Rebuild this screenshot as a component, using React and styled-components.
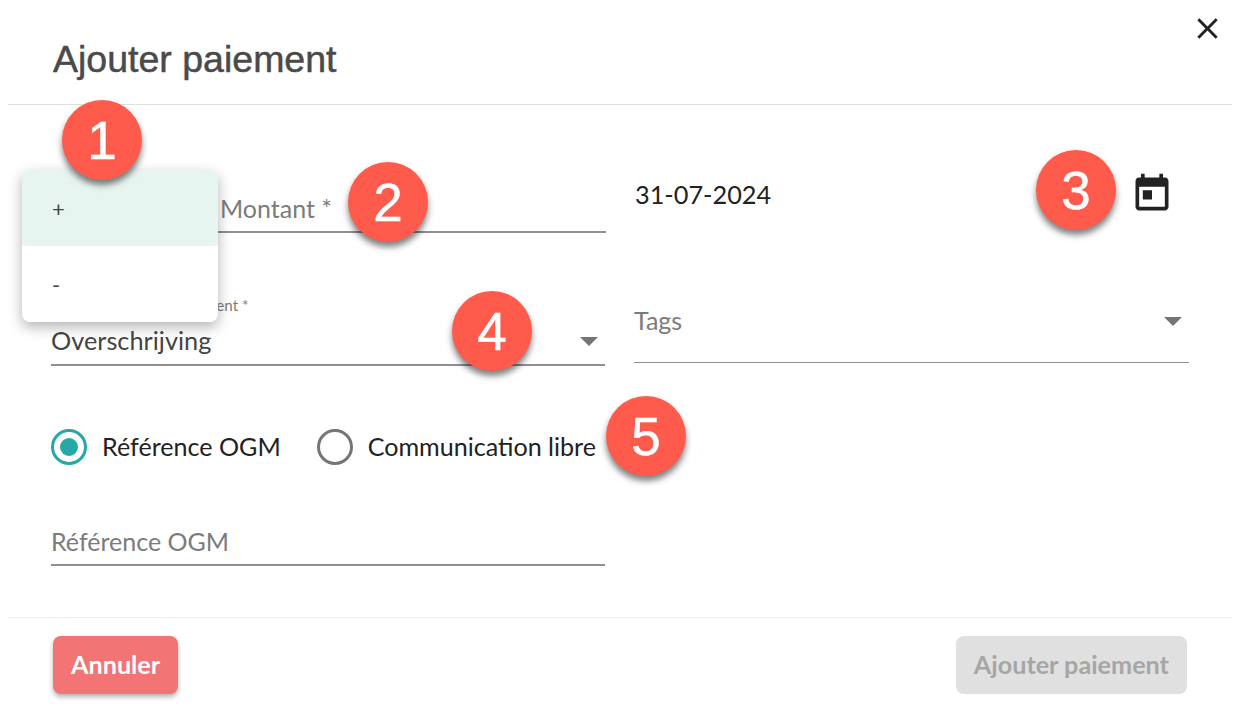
import styled, { createGlobalStyle } from "styled-components";

const GlobalStyle = createGlobalStyle`
  body {
    margin: 0;
    background: #fff;
    font-family: "Lato", "Liberation Sans", sans-serif;
  }
`;

const Dialog = styled.div`
  position: relative;
  width: 1246px;
  height: 724px;
  overflow: hidden;
  background: #fff;
`;

const Header = styled.div`
  height: 105px;
  margin: 0 14px 0 8px;
  padding: 0 0 0 45px;
  box-sizing: border-box;
  border-bottom: 1px solid #e0e0e0;
  display: flex;
  justify-content: space-between;
  align-items: flex-start;
`;

const Title = styled.h1`
  margin: 38px 0 0;
  font-family: "Liberation Sans", Arial, sans-serif;
  font-size: 37.5px;
  line-height: 42px;
  font-weight: 400;
  color: #4a4a4a;
  -webkit-text-stroke: 0.5px #4a4a4a;
`;

const CloseIcon = styled.svg`
  width: 35px;
  height: 35px;
  margin: 11px 7px 0 0;
  fill: #222;
`;

const Body = styled.div`
  height: 512px;
  box-sizing: border-box;
  padding: 78px 0 0 51px;
  display: flex;
  flex-direction: column;
`;

const Row = styled.div`
  display: grid;
  grid-template-columns: 555px 555px;
  column-gap: 28px;
  align-items: end;
  margin-bottom: ${(props) => props.$bottom || 0}px;
`;

const Field = styled.div`
  position: relative;
  height: 50px;
  box-sizing: border-box;
  display: flex;
  align-items: center;
  justify-content: space-between;
  padding-top: 2px;
  border-bottom: 2px solid #8f8f8f;
  font-size: 25px;
  color: #444;
`;

const TagsField = styled(Field)`
  height: 64px;
  margin-bottom: 3px;
  padding: 0 0 18px;
  border-bottom: 1px solid #8f8f8f;
`;

const DateField = styled.div`
  align-self: start;
  height: 22px;
  display: flex;
  align-items: center;
  justify-content: space-between;
  padding-left: 1px;
  font-size: 25.3px;
  color: #222;
`;

const Placeholder = styled.span`
  color: #7b7b7b;
  padding-left: ${(props) => props.$indent || 0}px;
`;

const TagsPlaceholder = styled(Placeholder)`
  margin-bottom: 4px;
`;

const SelectValue = styled.span`
  font-size: 25.3px;
  margin-bottom: 2px;
`;

const SmallLabel = styled.label`
  position: absolute;
  left: 0;
  top: -20px;
  font-size: 15.2px;
  line-height: 18px;
  color: #7b7b7b;
`;

const Arrow = styled.span`
  width: 0;
  height: 0;
  margin-right: 7px;
  border-left: 9px solid transparent;
  border-right: 9px solid transparent;
  border-top: 9px solid #757575;
`;

const CalendarIcon = styled.svg`
  width: 44px;
  height: 44px;
  flex-shrink: 0;
  margin-right: 15px;
  fill: #222;
`;

const RadioRow = styled.div`
  display: flex;
  align-items: center;
  gap: 36px;
  height: 40px;
  margin: 61px 0 49px;
`;

const RadioOption = styled.div`
  display: flex;
  align-items: center;
  gap: 15px;
  font-size: 25.1px;
  color: #222;
`;

const RadioLabel = styled.span`
  margin-bottom: 2px;
`;

const RadioCircle = styled.span`
  width: 36px;
  height: 36px;
  box-sizing: border-box;
  border-radius: 50%;
  border: 3.5px solid ${(props) => (props.$checked ? "#26a9a5" : "#757575")};
  display: flex;
  align-items: center;
  justify-content: center;
  &::after {
    content: "";
    display: ${(props) => (props.$checked ? "block" : "none")};
    width: 18px;
    height: 18px;
    border-radius: 50%;
    background: #26a9a5;
  }
`;

const HalfField = styled.div`
  width: 554px;
`;

const Footer = styled.div`
  height: 107px;
  margin: 0 14px 0 8px;
  padding: 18px 45px 0;
  box-sizing: border-box;
  border-top: 1px solid #eeeeee;
  display: flex;
  justify-content: space-between;
  align-items: flex-start;
`;

const Button = styled.button`
  height: 58px;
  padding: 0 18px 2px;
  border: none;
  border-radius: 8px;
  font-family: inherit;
  font-size: 25.2px;
  font-weight: 700;
  color: ${(props) => (props.disabled ? "#a6a6a6" : "#fff")};
  background: ${(props) => (props.disabled ? "#e0e0e0" : "#f27474")};
  box-shadow: ${(props) =>
    props.disabled ? "none" : "0 3px 5px rgba(0, 0, 0, 0.3)"};
`;

const Menu = styled.ul`
  position: absolute;
  left: 22px;
  top: 170px;
  width: 196px;
  height: 152px;
  margin: 0;
  padding: 0;
  list-style: none;
  overflow: hidden;
  background: #fff;
  border-radius: 8px;
  box-shadow: 0 5px 14px rgba(0, 0, 0, 0.3);
`;

const MenuItem = styled.li`
  height: 76px;
  padding: 0 0 0 30px;
  box-sizing: border-box;
  display: flex;
  align-items: center;
  font-size: 22px;
  color: #444;
  background: ${(props) => (props.$selected ? "#e7f5f0" : "transparent")};
`;

const Badge = styled.div`
  position: absolute;
  left: ${(props) => props.$x}px;
  top: ${(props) => props.$y}px;
  width: 80px;
  height: 80px;
  border-radius: 50%;
  background: #ff5b4d;
  box-shadow: 0 5px 6px rgba(0, 0, 0, 0.5);
  color: #fff;
  font-family: "Liberation Sans", Arial, sans-serif;
  font-size: 53px;
  -webkit-text-stroke: 0.5px #fff;
  display: flex;
  align-items: center;
  justify-content: center;
`;

const badges = [
  { n: 1, x: 62, y: 100 },
  { n: 2, x: 348, y: 162 },
  { n: 3, x: 1036, y: 150 },
  { n: 4, x: 452, y: 291 },
  { n: 5, x: 606, y: 396 },
];

const App = () => {
  return (
    <>
      <GlobalStyle />
      <Dialog>
        <Header>
          <Title>Ajouter paiement</Title>
          <CloseIcon viewBox="0 0 24 24">
            <path d="M19 6.41 17.59 5 12 10.59 6.41 5 5 6.41 10.59 12 5 17.59 6.41 19 12 13.41 17.59 19 19 17.59 13.41 12z" />
          </CloseIcon>
        </Header>
        <Body>
          <Row $bottom={66}>
            <Field>
              <Placeholder $indent={169}>Montant *</Placeholder>
            </Field>
            <DateField>
              31-07-2024
              <CalendarIcon viewBox="0 0 24 24">
                <path d="M19 3h-1V1h-2v2H8V1H6v2H5c-1.11 0-1.99.9-1.99 2L3 19c0 1.1.89 2 2 2h14c1.1 0 2-.9 2-2V5c0-1.1-.9-2-2-2zm0 16H5V8h14v11zM7 10h5v5H7z" />
              </CalendarIcon>
            </DateField>
          </Row>
          <Row>
            <HalfField>
              <Field>
                <SmallLabel>Choisir un type de paiement *</SmallLabel>
                <SelectValue>Overschrijving</SelectValue>
                <Arrow />
              </Field>
            </HalfField>
            <TagsField>
              <TagsPlaceholder>Tags</TagsPlaceholder>
              <Arrow />
            </TagsField>
          </Row>
          <RadioRow>
            <RadioOption>
              <RadioCircle $checked />
              <RadioLabel>Référence OGM</RadioLabel>
            </RadioOption>
            <RadioOption>
              <RadioCircle />
              <RadioLabel>Communication libre</RadioLabel>
            </RadioOption>
          </RadioRow>
          <HalfField>
            <Field>
              <Placeholder>Référence OGM</Placeholder>
            </Field>
          </HalfField>
        </Body>
        <Footer>
          <Button>Annuler</Button>
          <Button disabled>Ajouter paiement</Button>
        </Footer>
        <Menu>
          <MenuItem $selected>+</MenuItem>
          <MenuItem>-</MenuItem>
        </Menu>
        {badges.map((b) => (
          <Badge key={b.n} $x={b.x} $y={b.y}>
            {b.n}
          </Badge>
        ))}
      </Dialog>
    </>
  );
};

export default App;
